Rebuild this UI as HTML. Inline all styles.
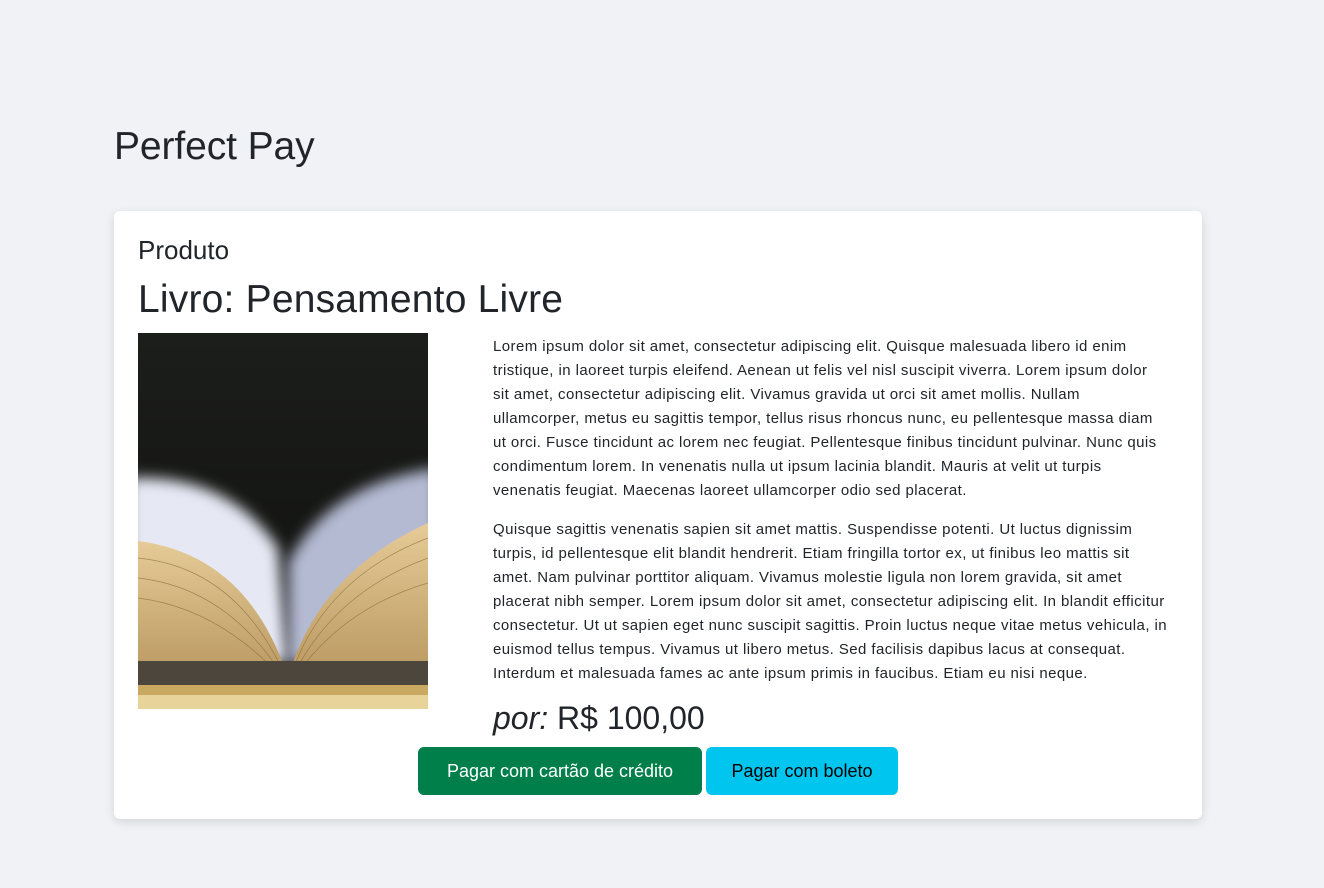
<!DOCTYPE html>
<html><head><meta charset="utf-8"><style>
body{margin:0;background:#f0f2f6;font-family:"Liberation Sans",sans-serif;color:#212529;width:1324px;height:888px;overflow:hidden;position:relative}
h1{position:absolute;left:114px;top:125px;margin:0;font-weight:400;font-size:39px;letter-spacing:-0.1px}
.card{position:absolute;left:114px;top:211px;width:1088px;height:608px;background:#fff;border-radius:6px;box-shadow:0 3px 10px rgba(0,0,0,.12)}
.t1{position:absolute;left:24px;top:24px;font-size:26px}
.t2{position:absolute;left:24px;top:67px;font-size:39px;letter-spacing:0.2px}
.img{position:absolute;left:24px;top:122px;width:290px;height:376px}
.txt{position:absolute;left:379px;top:124px;font-size:15px;line-height:24px;white-space:nowrap;letter-spacing:0.42px}
.txt p{margin:0 0 15px}
.price{position:absolute;left:379px;top:489px;font-size:32px}
.btn{position:absolute;top:536px;height:48px;border-radius:6px;font-size:18px;line-height:48px;text-align:center}
</style></head><body>
<h1>Perfect Pay</h1>
<div class="card">
<div class="t1">Produto</div>
<div class="t2">Livro: Pensamento Livre</div>
<svg class="img" viewBox="0 0 290 376">
<defs>
<linearGradient id="bg" x1="0" y1="0" x2="0" y2="1"><stop offset="0" stop-color="#1c1e1b"/><stop offset=".6" stop-color="#141513"/></linearGradient>
<linearGradient id="pg" x1="0" y1="0" x2="0" y2="1"><stop offset="0" stop-color="#e6cb98"/><stop offset="1" stop-color="#b8965e"/></linearGradient>
<filter id="b"><feGaussianBlur stdDeviation="7"/></filter>
</defs>
<rect width="290" height="376" fill="url(#bg)"/>
<path d="M-10 145 Q90 140 140 215 L150 330 L-10 330Z" fill="#e6e9f4" filter="url(#b)"/>
<path d="M300 135 Q190 150 150 230 L150 330 L300 330Z" fill="#b4bad2" filter="url(#b)"/>
<path d="M0 208 Q110 222 150 345 L150 350 L0 350Z" fill="url(#pg)"/>
<path d="M290 190 Q180 240 150 345 L290 350Z" fill="url(#pg)"/>
<g stroke="#8a6a3a" stroke-width=".7" fill="none" opacity=".7">
<path d="M0 225 Q100 235 148 345"/><path d="M0 245 Q90 255 146 345"/><path d="M0 265 Q80 275 144 345"/>
<path d="M290 205 Q185 245 152 345"/><path d="M290 225 Q195 260 154 345"/><path d="M290 250 Q205 275 156 345"/></g>
<path d="M0 328 L290 328 L290 352 L0 352Z" fill="#4d463c"/>
<path d="M0 352 L290 352 L290 376 L0 376Z" fill="#c9a862"/>
<rect y="362" width="290" height="14" fill="#e8d49a"/>
</svg>
<div class="txt"><p>Lorem ipsum dolor sit amet, consectetur adipiscing elit. Quisque malesuada libero id enim<br>tristique, in laoreet turpis eleifend. Aenean ut felis vel nisl suscipit viverra. Lorem ipsum dolor<br>sit amet, consectetur adipiscing elit. Vivamus gravida ut orci sit amet mollis. Nullam<br>ullamcorper, metus eu sagittis tempor, tellus risus rhoncus nunc, eu pellentesque massa diam<br>ut orci. Fusce tincidunt ac lorem nec feugiat. Pellentesque finibus tincidunt pulvinar. Nunc quis<br>condimentum lorem. In venenatis nulla ut ipsum lacinia blandit. Mauris at velit ut turpis<br>venenatis feugiat. Maecenas laoreet ullamcorper odio sed placerat.</p>
<p>Quisque sagittis venenatis sapien sit amet mattis. Suspendisse potenti. Ut luctus dignissim<br>turpis, id pellentesque elit blandit hendrerit. Etiam fringilla tortor ex, ut finibus leo mattis sit<br>amet. Nam pulvinar porttitor aliquam. Vivamus molestie ligula non lorem gravida, sit amet<br>placerat nibh semper. Lorem ipsum dolor sit amet, consectetur adipiscing elit. In blandit efficitur<br>consectetur. Ut ut sapien eget nunc suscipit sagittis. Proin luctus neque vitae metus vehicula, in<br>euismod tellus tempus. Vivamus ut libero metus. Sed facilisis dapibus lacus at consequat.<br>Interdum et malesuada fames ac ante ipsum primis in faucibus. Etiam eu nisi neque.</p></div>
<div class="price"><i>por:</i> R$ 100,00</div>
<div class="btn" style="left:304px;width:284px;background:#007f4b;color:#fff">Pagar com cartão de crédito</div>
<div class="btn" style="left:592px;width:192px;background:#00c5ef;color:#000">Pagar com boleto</div>
</div>
</body></html>
